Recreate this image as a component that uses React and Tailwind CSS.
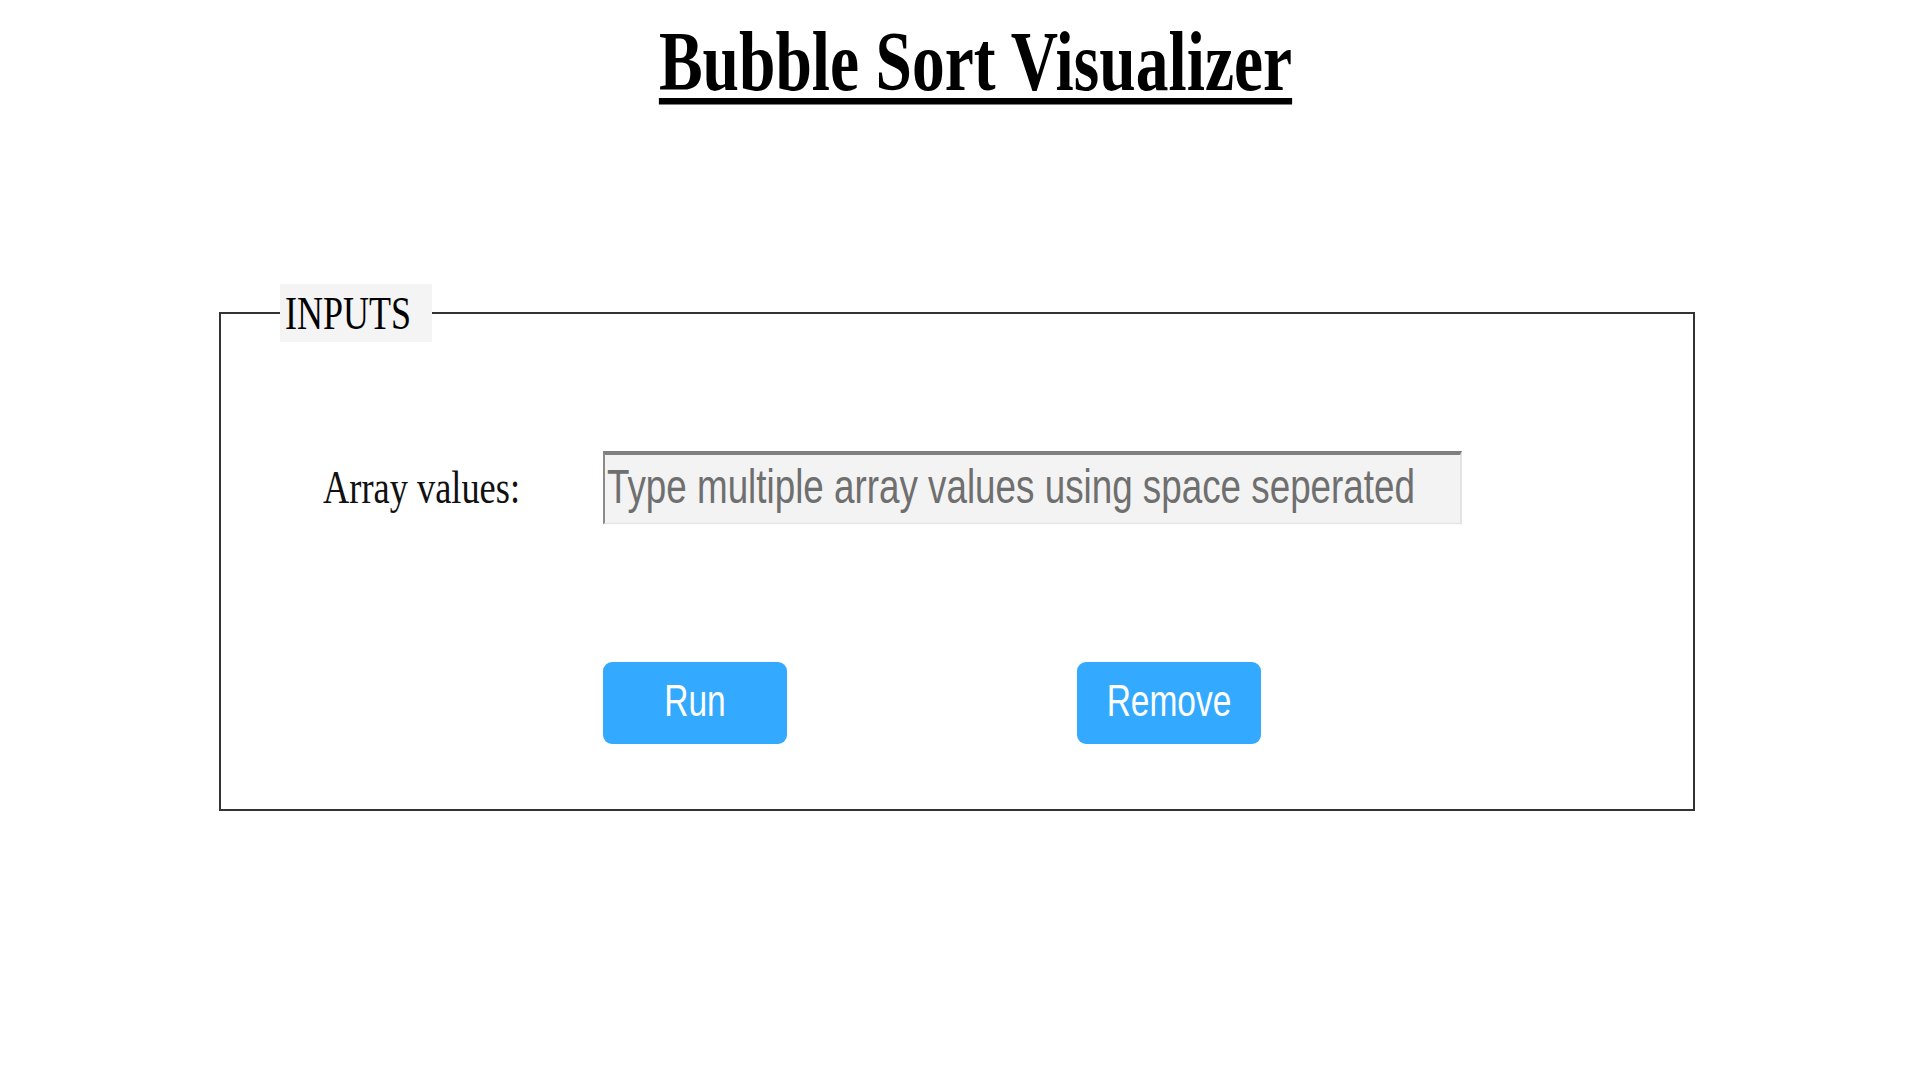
export default function App() {
  return (
    <div className="min-h-screen w-full bg-white font-['Liberation_Serif','Times_New_Roman',serif] text-black">
      {/* title */}
      <h1 className="pt-[20px] pl-[31px] text-center text-[65.5px] font-bold leading-none">
        <span className="inline-block origin-top scale-y-[1.3] underline decoration-[length:4.6px] underline-offset-[6px]">
          Bubble Sort Visualizer
        </span>
      </h1>

      {/* inputs box */}
      <fieldset className="ml-[219px] mt-[198px] w-[1476px] border-2 border-[#333] pb-[65px]">
        <legend className="ml-[59px] w-[152px] bg-[#f4f4f4] py-[11px] pl-[5px] text-[36px] leading-none">
          <span className="inline-block scale-y-[1.3]">INPUTS</span>
        </legend>

        <div className="mt-[109px] flex h-[73px] items-center pl-[102px]">
          <label htmlFor="arr" className="w-[280px] text-[36.4px] leading-none text-[#111]">
            <span className="inline-block scale-y-[1.3]">Array values:</span>
          </label>
          <div className="h-[73px] w-[859px]">
            <input
              id="arr"
              type="text"
              placeholder="Type multiple array values using space seperated"
              className="h-[55px] w-[859px] origin-top scale-y-[1.33] border-t-[3px] border-l-2 border-r-2 border-b-[1.5px] border-t-[#808080] border-l-[#8a8a8a] border-r-[#e4e4e4] border-b-[#e4e4e4] bg-[#f3f3f3] pb-[3px] pl-[2px] font-['Liberation_Sans',Arial,sans-serif] text-[36.8px] text-[#333] outline-none placeholder:text-[#6f6f6f]"
            />
          </div>
        </div>

        <div className="mt-[138px] flex gap-[290px] pl-[382px]">
          <button className="flex h-[82px] w-[184px] items-center justify-center rounded-[9px] bg-[#33aaff] pb-[3px] font-['Liberation_Sans',Arial,sans-serif] text-[33.5px] leading-none text-white">
            <span className="inline-block scale-y-[1.35]">Run</span>
          </button>
          <button className="flex h-[82px] w-[184px] items-center justify-center rounded-[9px] bg-[#33aaff] pb-[3px] font-['Liberation_Sans',Arial,sans-serif] text-[33.5px] leading-none text-white">
            <span className="inline-block scale-y-[1.35]">Remove</span>
          </button>
        </div>
      </fieldset>
    </div>
  );
}
